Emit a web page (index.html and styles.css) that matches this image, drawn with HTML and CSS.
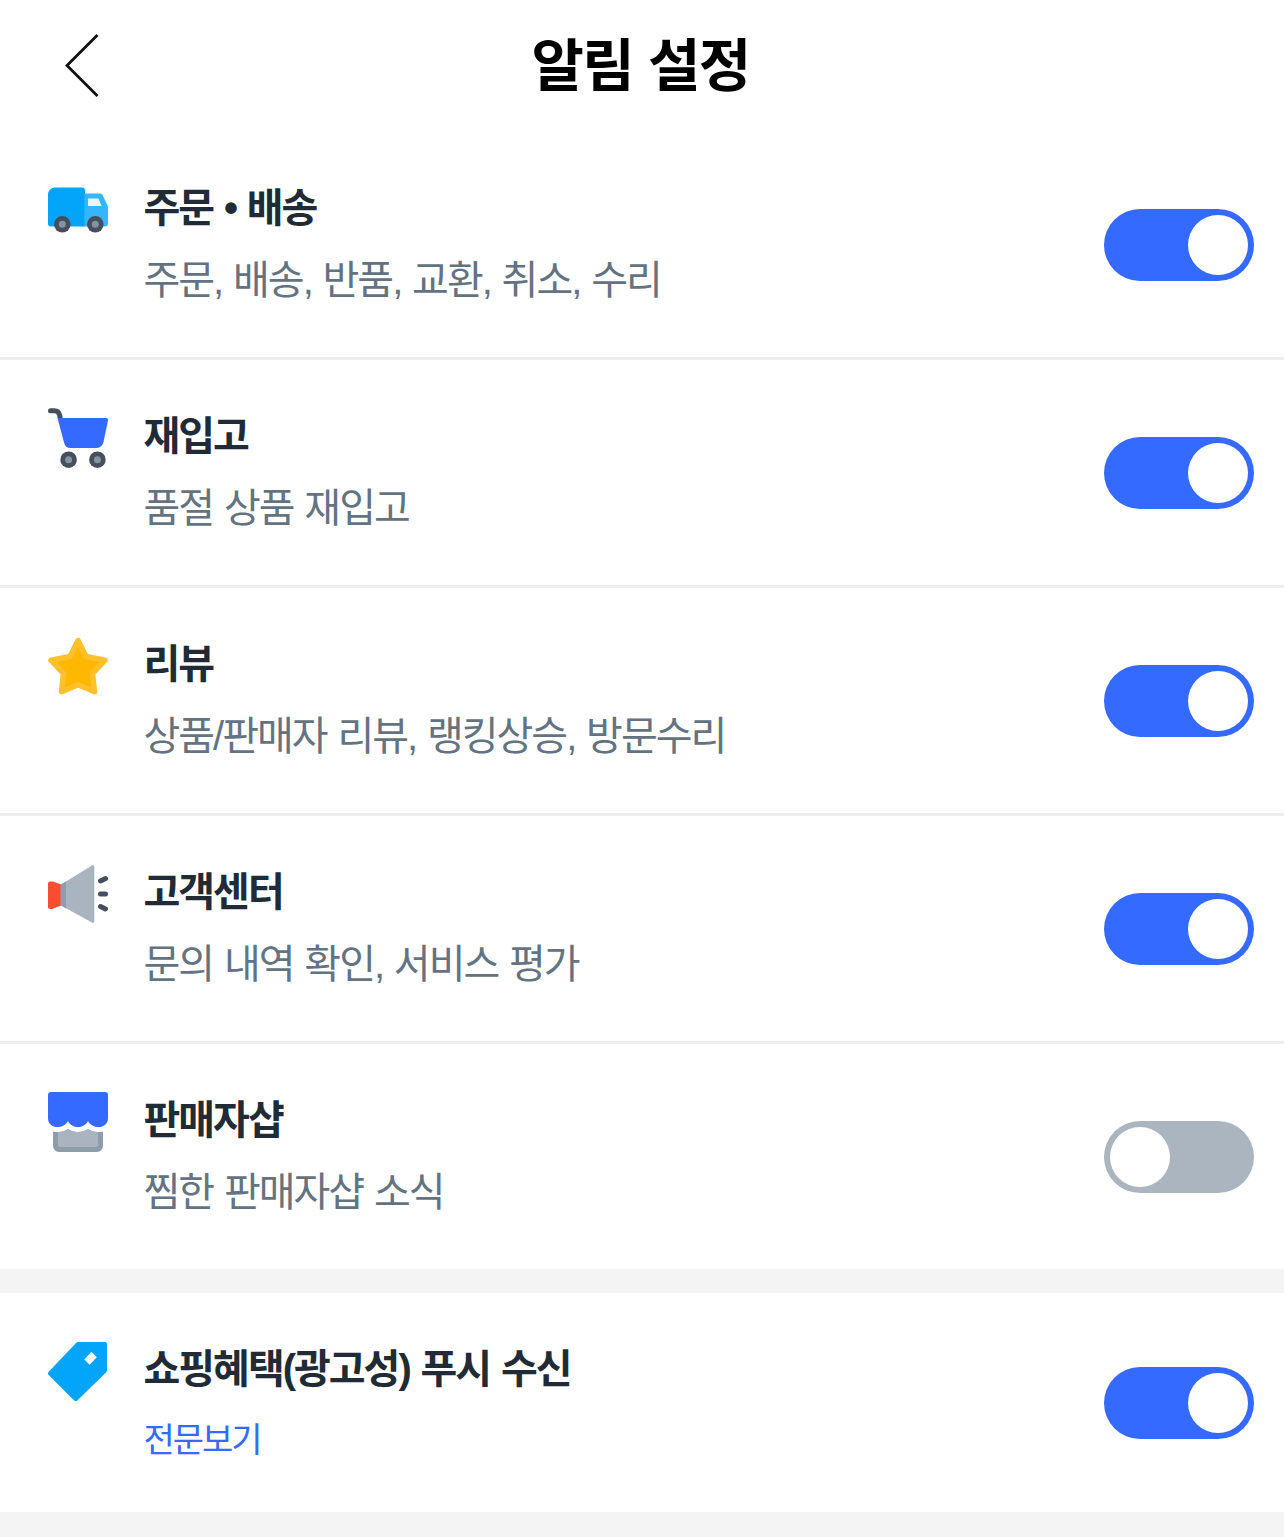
FILE: index.html
```html
<!DOCTYPE html>
<html lang="ko">
<head>
    <meta charset="UTF-8">
    <meta name="viewport" content="width=device-width, initial-scale=1.0">
    <title>알림 설정</title>
    <link rel="stylesheet" href="styles.css">
</head>
<body>
    <header class="header">
        <a class="back" href="#" aria-label="뒤로">
            <svg width="36" height="66" viewBox="0 0 36 66" fill="none" stroke="#111" stroke-width="2.8">
                <path d="M34.500 2 L4 32.500 L34.500 63"/>
            </svg>
        </a>
        <h1>알림 설정</h1>
    </header>

    <ul class="settings">
        <li class="row">
            <svg class="icon" viewBox="0 0 60 60">
                <path fill="#03a5fb" d="M7 7.500H34a3 3 0 0 1 3 3V46.500H3a3 3 0 0 1-3-3V14.500a7 7 0 0 1 7-7z"/>
                <path fill="#36b5fb" d="M36.500 13.500H52a3 3 0 0 1 2.700 1.700L59.300 25a7 7 0 0 1 .7 3V43.500a3 3 0 0 1-3 3H36.500z"/>
                <path fill="#eef4fa" d="M40 18.500H50.500L53.500 26H40z"/>
                <circle cx="14.300" cy="44.300" r="8.300" fill="#454f5d"/>
                <circle cx="14.300" cy="44.300" r="3.500" fill="#8593a1"/>
                <circle cx="47.300" cy="44.300" r="8.300" fill="#454f5d"/>
                <circle cx="47.300" cy="44.300" r="3.500" fill="#8593a1"/>
            </svg>
            <div class="text">
                <h2>주문 • 배송</h2>
                <p>주문, 배송, 반품, 교환, 취소, 수리</p>
            </div>
            <button class="toggle on" aria-label="주문 배송 알림"></button>
        </li>
        <li class="row">
            <svg class="icon" viewBox="0 0 60 60">
                <path fill="none" stroke="#454f5d" stroke-width="5" stroke-linecap="round" d="M2.500 2.700H6.500Q10.500 2.700 11.500 7L12.500 11"/>
                <path fill="#346aff" d="M9.500 10H58a2 2 0 0 1 2 2.500L55.500 34a7 7 0 0 1-7 6H23a7 7 0 0 1-7-5.500z"/>
                <circle cx="20.600" cy="51.700" r="8.300" fill="#454f5d"/>
                <circle cx="20.600" cy="51.700" r="3.500" fill="#8593a1"/>
                <circle cx="49.400" cy="51.700" r="8.300" fill="#454f5d"/>
                <circle cx="49.400" cy="51.700" r="3.500" fill="#8593a1"/>
            </svg>
            <div class="text">
                <h2>재입고</h2>
                <p>품절 상품 재입고</p>
            </div>
            <button class="toggle on" aria-label="재입고 알림"></button>
        </li>
        <li class="row">
            <svg class="icon" viewBox="0 0 60 60">
                <path fill="#ffb700" stroke="#ffc02e" stroke-width="5.500" stroke-linejoin="round" d="M30 4.500L38 20.500L57 24.200L44.500 37.500L46.500 55.700L30 48.700L13.500 55.700L15.500 37.500L3 24.200L22 20.500z"/>
            </svg>
            <div class="text">
                <h2>리뷰</h2>
                <p>상품/판매자 리뷰, 랭킹상승, 방문수리</p>
            </div>
            <button class="toggle on" aria-label="리뷰 알림"></button>
        </li>
        <li class="row">
            <svg class="icon" viewBox="0 0 60 60">
                <path fill="#fb4c2f" d="M0 19.500a2 2 0 0 1 2-2H5L13 20.500V41.500L4 45H2a2 2 0 0 1-2-2z"/>
                <path fill="#a9b4c0" d="M13 20.500L43.500 1.700a1.600 1.600 0 0 1 2.800 1.300V57a1.600 1.600 0 0 1-2.800 1.300L13 41.500z"/>
                <path fill="#8e9dab" d="M12.500 20.800L18 17.500V44.300L12.500 41.300z"/>
                <path fill="none" stroke="#454f5d" stroke-width="5" stroke-linecap="round" d="M52.500 17L57.500 14.500M52.500 30H57.500M52.500 42.500L57.500 45"/>
            </svg>
            <div class="text">
                <h2>고객센터</h2>
                <p>문의 내역 확인, 서비스 평가</p>
            </div>
            <button class="toggle on" aria-label="고객센터 알림"></button>
        </li>
        <li class="row">
            <svg class="icon" viewBox="0 0 60 60">
                <path fill="#8e9dab" d="M5 39.500Q8 40 10 40Q16 40 20 37Q24 40 30 40Q36 40 40 37Q44 40 50 40Q52 40 55 39.500V54a6 6 0 0 1-6 6H11a6 6 0 0 1-6-6z"/>
                <path fill="#a9b4c0" d="M10 40Q16 40 20 37.500Q24 40 30 40Q36 40 40 37.500Q44 40 50 40V53a2 2 0 0 1-2 2H12a2 2 0 0 1-2-2z"/>
                <path fill="#346aff" d="M3 0H57a3 3 0 0 1 3 3V26C60 37 45 38 40 29C36 37 24 37 20 29C15 38 0 37 0 26V3a3 3 0 0 1 3-3z"/>
            </svg>
            <div class="text">
                <h2>판매자샵</h2>
                <p>찜한 판매자샵 소식</p>
            </div>
            <button class="toggle" aria-label="판매자샵 알림"></button>
        </li>
    </ul>

    <ul class="settings">
        <li class="row">
            <svg class="icon" viewBox="0 0 60 60">
                <path fill="#03a5fb" fill-rule="evenodd" d="M30.500 1H57a2 2 0 0 1 2 2V29.500a3 3 0 0 1-1 2L29.500 59.200a2.600 2.600 0 0 1-3.600 0L.7 34a2.200 2.200 0 0 1 0-3.200L28 2a3 3 0 0 1 2.500-1zM43.500 10.800L36.300 18.500L41.500 23.700L48.800 16.200z"/>
            </svg>
            <div class="text">
                <h2>쇼핑혜택(광고성) 푸시 수신</h2>
                <a class="more" href="#">전문보기</a>
            </div>
            <button class="toggle on" aria-label="쇼핑혜택 푸시 수신"></button>
        </li>
    </ul>
</body>
</html>
```

FILE: styles.css
```css
* {
    box-sizing: border-box;
}

body {
    margin: 0;
    min-height: 1537px;
    font-family: "Liberation Sans", "Noto Sans CJK KR", sans-serif;
    background-color: #f4f4f4;
}

.header {
    display: grid;
    grid-template-columns: 132px 1fr 132px;
    align-items: center;
    height: 132px;
    background-color: #fff;
}

.back {
    display: flex;
    padding-left: 63px;
}

h1 {
    margin: 0;
    padding-right: 3px;
    font-size: 57px;
    line-height: 84px;
    font-weight: 700;
    letter-spacing: -1.7px;
    word-spacing: 1px;
    text-align: center;
    color: #000;
}

.settings {
    list-style: none;
    margin: 0 0 24px;
    padding: 0;
    background-color: #fff;
}

.row {
    display: flex;
    height: 228px;
    padding: 48px 30px 0 48px;
    border-bottom: 3px solid #eee;
}

.row:last-child {
    height: 225px;
    border-bottom: none;
}

.settings:last-child .row {
    height: 219px;
}

.icon {
    flex: none;
    width: 60px;
    height: 60px;
    margin-right: 35.5px;
}

.text {
    flex: 1;
    margin-top: -8px;
}

h2, p, .more {
    display: block;
    margin: 0;
    font-size: 40px;
    line-height: 72px;
    letter-spacing: -2px;
    word-spacing: 1.7px;
    white-space: nowrap;
    text-decoration: none;
}

h2 {
    font-weight: 700;
    color: #212b36;
}

p {
    font-weight: 400;
    color: #637381;
}

.more {
    font-size: 34px;
    line-height: 70px;
    color: #346aff;
}

.toggle {
    flex: none;
    align-self: center;
    width: 150px;
    height: 72px;
    margin-top: -47px;
    padding: 6px;
    border: none;
    border-radius: 36px;
    background-color: #aab5c0;
    display: flex;
}

.toggle::before {
    content: "";
    width: 60px;
    height: 60px;
    border-radius: 50%;
    background-color: #fff;
}

.toggle.on {
    justify-content: flex-end;
    background-color: #346aff;
}
```
